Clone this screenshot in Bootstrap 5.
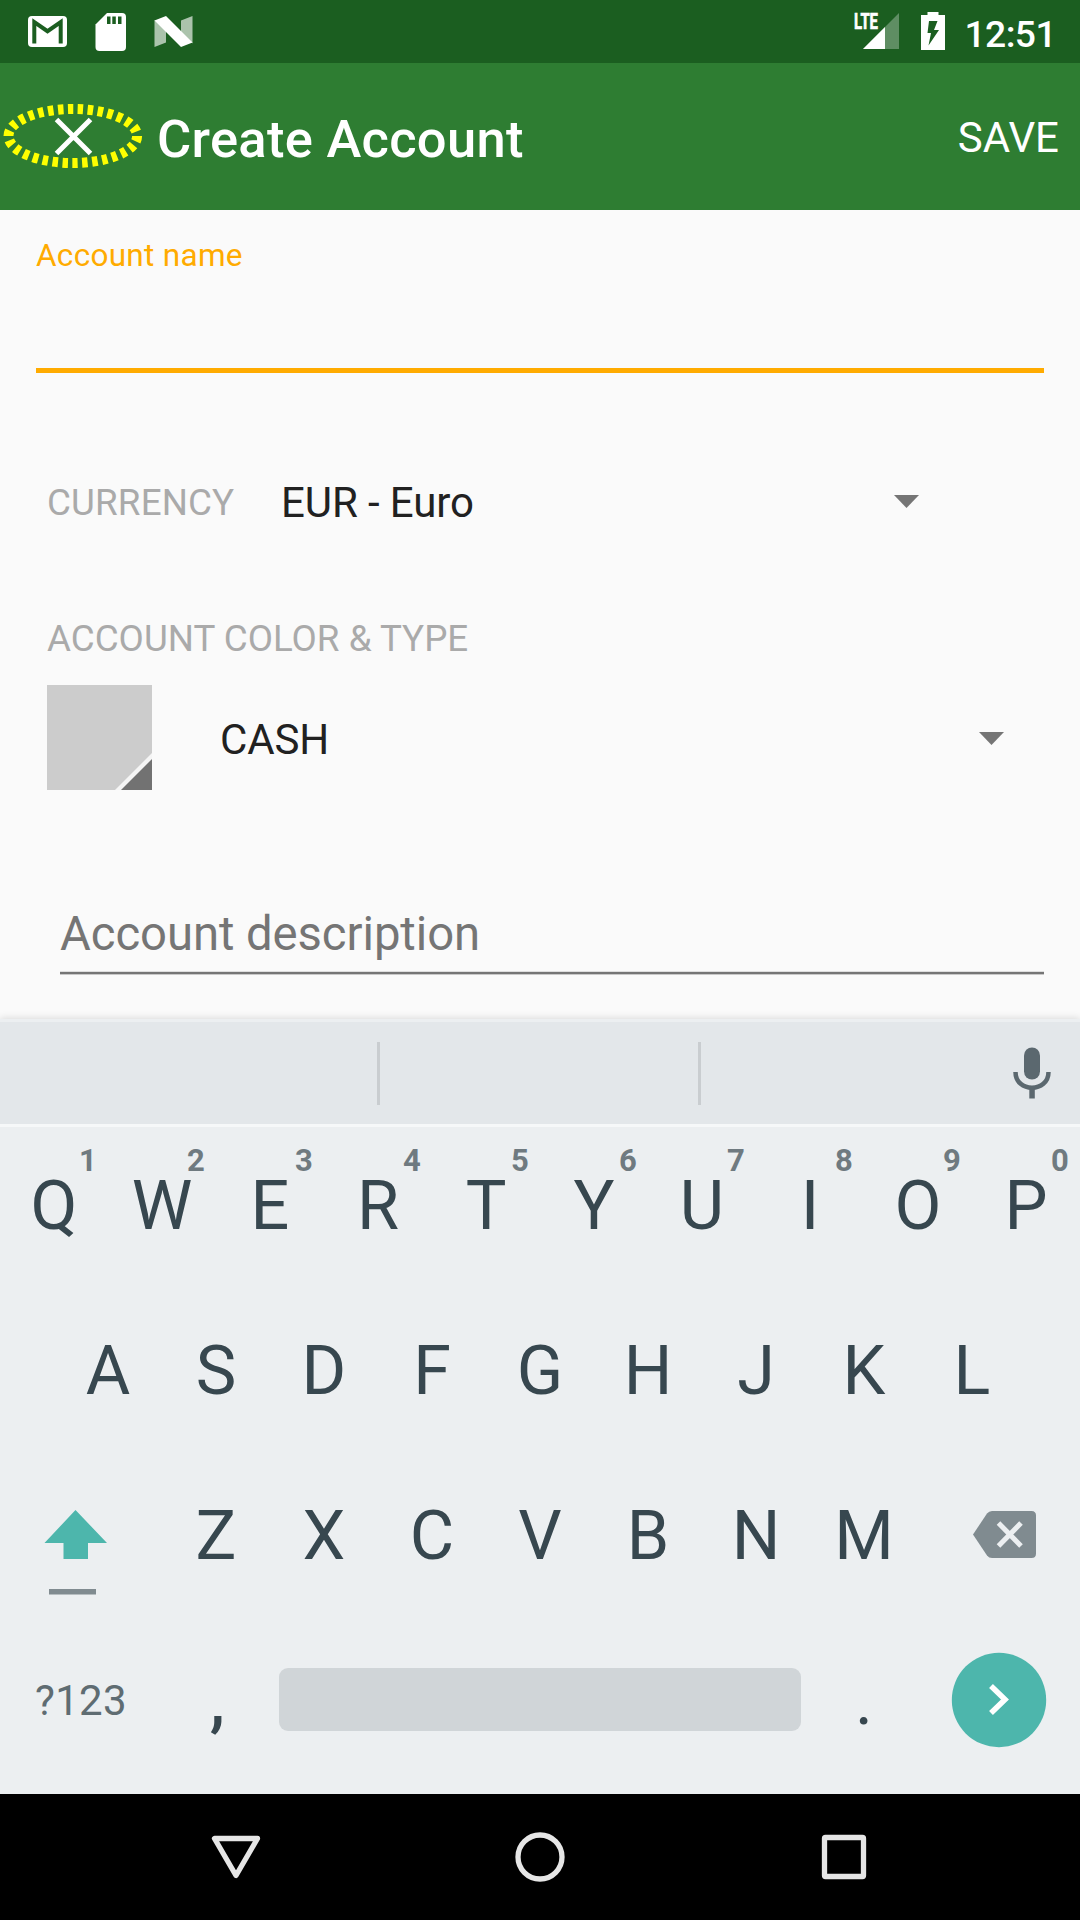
<!DOCTYPE html>
<html lang="en">
<head>
<meta charset="utf-8">
<meta name="viewport" content="width=device-width, initial-scale=1">
<title>Create Account</title>
<link href="https://cdn.jsdelivr.net/npm/bootstrap@5.3.0/dist/css/bootstrap.min.css" rel="stylesheet">
<style>
  body { font-family: Roboto, "Liberation Sans", sans-serif; background: #fafafa; color: #212121; width: 1080px; height: 1920px; overflow: hidden; }
  svg { display: block; flex: none; }
  .status-bar { height: 63px; background: #1b5e20; padding: 0 24px 0 28px; }
  .clock { font-size: 37.25px; font-weight: 500; line-height: 60px; padding-top: 4px; margin-left: 18px; letter-spacing: -.6px; }
  .app-bar { height: 147px; background: #2e7d32; padding: 0 21px 0 0; }
  .close-btn { width: 157px; height: 147px; }
  .app-title { font-size: 52.5px; font-weight: 500; line-height: 60px; padding-top: 4px; letter-spacing: .28px; }
  .save-btn { font-size: 42px; line-height: 60px; padding: 2px 0 0; border: 0; border-radius: 0; }
  .form-area { height: 809px; padding: 0 36px; }
  .name-label { font-size: 31.5px; line-height: 90px; height: 90px; padding-top: 1px; color: #ffab00; letter-spacing: .3px; }
  .line-input { background: transparent; border: 0; border-radius: 0; padding: 0; }
  .name-input { height: 73px; border-bottom: 5px solid #ffab00; }
  .currency-row { height: 100px; margin: 79px 0 57px; padding: 0 125.5px 0 11px; }
  .currency-row .caption, .currency-row .value { padding-top: 2px; }
  .currency-row .caret { margin-bottom: 2px; }
  .caption { font-size: 36.75px; line-height: 60px; color: #aaa; }
  .currency-row .caption { width: 234px; letter-spacing: .15px; }
  .type-caption { padding-left: 11px; }
  .value { font-size: 42px; line-height: 60px; letter-spacing: -.1px; }
  .type-row { margin: 16px 0 114px; padding: 0 40px 0 11px; height: 105px; }
  .type-row .caret { margin-top: 2px; }
  .type-row .value { margin-left: 68px; padding-top: 4px; }
  .desc-input { width: 984px; height: 70px; margin-left: 24px; border-bottom: 2px solid #757575; box-shadow: 0 1px 0 #c8c8c8, inset 0 -1px 0 #dedede; font-size: 47.25px; line-height: 60px; color: #757575; letter-spacing: -.07px; }
  .keyboard { height: 775px; background: #eceff1; color: #37474f; position: relative; box-shadow: 0 -1px 7px rgba(0,0,0,.13); }
  .suggest { height: 108px; background: #e3e7ea; border-top: 3px solid #eceff1; border-bottom: 3px solid #f6f8f9; padding-right: 29px; }
  .mic { margin-bottom: 1px; }
  .sep { width: 3px; height: 63px; background: #c9cdd0; }
  .gap-a { width: 377px; } .gap-b { width: 318px; }
  .key-row { height: 165px; }
  .key { width: 108px; height: 165px; text-align: center; font-size: 68.25px; line-height: 158px; position: relative; }
  .hint { position: absolute; left: 68px; top: 14px; width: 40px; font-size: 31px; line-height: 40px; font-weight: 700; color: #6f7a80; }
  .sym-key { width: 162px; font-size: 42px; line-height: 157px; color: #5f6c72; text-align: center; letter-spacing: .3px; }
  .comma { padding-left: 3px; font-weight: 500; }
  .space-cell { width: 540px; padding: 46px 9px 0; }
  .space-key { width: 522px; height: 63px; border-radius: 9px; background: #d0d5d8; }
  .nav-keys { height: 126px; background: #000; }
</style>
</head>
<body>
<div class="status-bar d-flex align-items-center justify-content-between text-white">
  <div class="d-flex align-items-center">
    <svg width="165" height="63" viewBox="28 0 165 63">
      <rect x="28" y="16" width="39" height="31" rx="4" fill="#fff"/>
      <path d="M34.3 43.500V22L47.500 31.200L60.700 22V43.500" fill="none" stroke="#1b5e20" stroke-width="4"/>
      <path d="M107 13H122Q126 13 126 17V47Q126 51 122 51H99.500Q95.500 51 95.500 47V24.500Z" fill="#fff"/>
      <path d="M107 16.500h3.500v7.500H107zM112.300 16.500h3.500v7.500h-3.500zM118 16.500h3.500v7.500H118z" fill="#1b5e20"/>
      <path d="M154.500 20L166 31V42.500L154.500 47ZM192.500 16L181 20.500V32L192.500 43.500Z" fill="#fff" opacity=".63"/>
      <path d="M154.500 20.500L166 16L192.500 42.500L181 47Z" fill="#fff"/>
    </svg>
  </div>
  <div class="d-flex align-items-center">
    <svg width="92" height="63" viewBox="855 0 92 63">
      <path d="M900 13V49H864Z" fill="#fff" opacity=".3"/>
      <path d="M886 27V49H864Z" fill="#fff"/>
      <text x="855" y="29" font-family="Roboto" font-weight="700" font-size="22" fill="#fff" stroke="#fff" stroke-width=".7" textLength="24" lengthAdjust="spacingAndGlyphs">LTE</text>
      <path d="M928.500 12h11v3H946v35H922V15h6.500z" fill="#fff"/>
      <path d="M930 21H938.500L935 30H940L929.500 45.500L932 33H928.500Z" fill="#1b5e20"/>
    </svg>
    <div class="clock">12:51</div>
  </div>
</div>

<header class="app-bar d-flex align-items-center text-white">
  <svg class="close-btn" viewBox="0 63 157 147">
    <path d="M56.500 119.500L90.500 153.500M90.500 119.500L56.500 153.500" stroke="#fff" stroke-width="5" fill="none"/>
    <ellipse cx="72.800" cy="136" rx="64.300" ry="27" fill="none" stroke="#ff0" stroke-width="10" pathLength="300" stroke-dasharray="5.500 4.500"/>
  </svg>
  <div class="app-title">Create Account</div>
  <button class="btn save-btn text-white ms-auto">SAVE</button>
</header>

<main class="form-area">
  <label class="name-label d-block" for="accName">Account name</label>
  <input id="accName" class="line-input name-input d-block w-100" type="text">
  <div class="currency-row d-flex align-items-center">
    <div class="caption">CURRENCY</div>
    <div class="value">EUR - Euro</div>
    <svg class="caret ms-auto" width="25" height="13" viewBox="0 0 25 13"><path d="M0 0H25L12.500 13Z" fill="#757575"/></svg>
  </div>
  <div class="caption type-caption">ACCOUNT COLOR &amp; TYPE</div>
  <div class="type-row d-flex align-items-center">
    <svg width="105" height="105" viewBox="0 0 105 105">
      <path d="M0 0H105V105H0Z" fill="#ccc"/><path d="M105 68V105H68Z" fill="#f5f5f5"/><path d="M105 74V105H74Z" fill="#727272"/>
    </svg>
    <div class="value">CASH</div>
    <svg class="caret ms-auto" width="25" height="13" viewBox="0 0 25 13"><path d="M0 0H25L12.500 13Z" fill="#757575"/></svg>
  </div>
  <div class="desc-input">Account description</div>
</main>

<section class="keyboard">
  <div class="suggest d-flex align-items-center">
    <div class="gap-a"></div><div class="sep"></div><div class="gap-b"></div><div class="sep"></div>
    <svg class="mic ms-auto" width="38" height="52" viewBox="0 0 38 52">
      <rect x="11" y="0.500" width="16" height="32" rx="8" fill="#5b686f"/>
      <path d="M2.500 25C2.500 46 35.500 46 35.500 25" fill="none" stroke="#5b686f" stroke-width="4.500"/>
      <path d="M16.300 41h5.500v10.500h-5.500z" fill="#5b686f"/>
    </svg>
  </div>
  <div class="key-row d-flex">
    <div class="key">Q<span class="hint">1</span></div><div class="key">W<span class="hint">2</span></div><div class="key">E<span class="hint">3</span></div><div class="key">R<span class="hint">4</span></div><div class="key">T<span class="hint">5</span></div><div class="key">Y<span class="hint">6</span></div><div class="key">U<span class="hint">7</span></div><div class="key">I<span class="hint">8</span></div><div class="key">O<span class="hint">9</span></div><div class="key">P<span class="hint">0</span></div>
  </div>
  <div class="key-row d-flex justify-content-center">
    <div class="key">A</div><div class="key">S</div><div class="key">D</div><div class="key">F</div><div class="key">G</div><div class="key">H</div><div class="key">J</div><div class="key">K</div><div class="key">L</div>
  </div>
  <div class="key-row d-flex">
    <svg width="162" height="165" viewBox="0 1457 162 165">
      <path d="M75.500 1510L107 1543H88V1559H63.500V1543H44.500Z" fill="#4db6ac"/>
      <path d="M49 1589h47v5.500H49z" fill="#808b90"/>
    </svg>
    <div class="key">Z</div><div class="key">X</div><div class="key">C</div><div class="key">V</div><div class="key">B</div><div class="key">N</div><div class="key">M</div>
    <svg width="162" height="165" viewBox="918 1457 162 165">
      <path d="M973 1534.500L987 1513.500Q989 1511 992 1511H1031.500Q1036 1511 1036 1515.500V1553.500Q1036 1558 1031.500 1558H992Q989 1558 987 1555.500Z" fill="#808b90"/>
      <path d="M998.500 1523L1021 1546M1021 1523L998.500 1546" stroke="#eceff1" stroke-width="5" fill="none"/>
    </svg>
  </div>
  <div class="key-row d-flex">
    <div class="sym-key">?123</div>
    <div class="key comma">,</div>
    <div class="space-cell"><div class="space-key"></div></div>
    <div class="key">.</div>
    <svg width="162" height="165" viewBox="918 1622 162 165">
      <circle cx="999" cy="1700" r="47.200" fill="#4db6ac"/>
      <path d="M991 1686L1005 1699.500L991 1713" stroke="#fff" stroke-width="5.500" fill="none"/>
    </svg>
  </div>
</section>

<nav class="nav-keys">
  <svg width="1080" height="126" viewBox="0 1794 1080 126" fill="none" stroke="#e6e6e6" stroke-width="5.300" stroke-linejoin="round">
    <path d="M214.500 1838.500H257.500L236 1875.500Z"/>
    <circle cx="540" cy="1857" r="22"/>
    <rect x="824.500" y="1837.500" width="39" height="39" rx="1"/>
  </svg>
</nav>
<script src="https://cdn.jsdelivr.net/npm/bootstrap@5.3.0/dist/js/bootstrap.bundle.min.js"></script>
</body>
</html>
